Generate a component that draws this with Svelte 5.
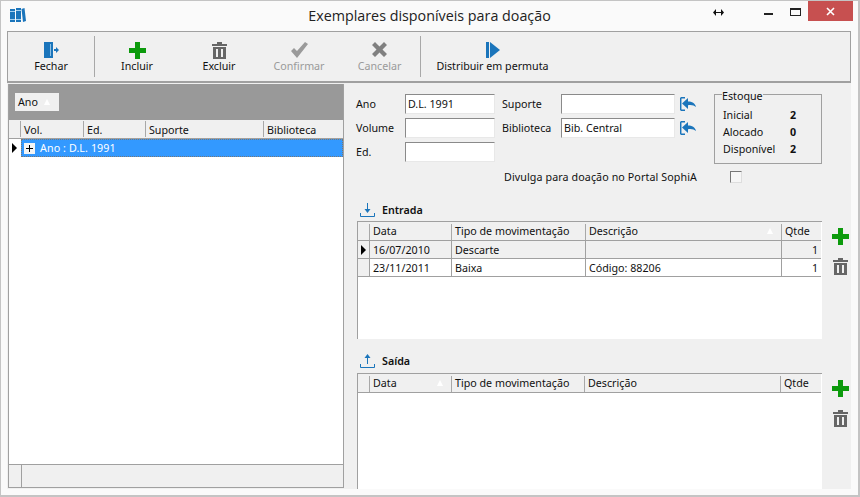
<script lang="ts">
  const tools = [
    { label: 'Fechar', icon: 'door', width: 86 },
    { label: 'Incluir', icon: 'plus', width: 85 },
    { label: 'Excluir', icon: 'trash', width: 80 },
    { label: 'Confirmar', icon: 'check', width: 80, off: true },
    { label: 'Cancelar', icon: 'cross', width: 81, off: true },
    { label: 'Distribuir em permuta', icon: 'play', width: 144 }
  ];

  const stock = [
    ['Inicial', 2],
    ['Alocado', 0],
    ['Disponível', 2]
  ];

  const entries = [
    { date: '16/07/2010', type: 'Descarte', desc: '', qty: 1, current: true },
    { date: '23/11/2011', type: 'Baixa', desc: 'Código: 88206', qty: 1 }
  ];
</script>

{#snippet icon(name)}
  {#if name === 'door'}
    <svg width="16" height="16" viewBox="0 0 16 16"><path fill="#1b75bb" d="M1 0h9v16H1z" /><path fill="#8cc0e6" d="M7 2h1v12H7z" /><path fill="#1b75bb" d="M11 7h2V5l3 3-3 3V9h-2z" /></svg>
  {:else if name === 'plus'}
    <svg width="17" height="17" viewBox="0 0 17 17"><path fill="#0c9a0c" d="M6 0h5v6h6v5h-6v6H6v-6H0V6h6z" /></svg>
  {:else if name === 'trash'}
    <svg width="15" height="17" viewBox="0 0 15 17"><path fill="#666" fill-rule="evenodd" d="M5 0h5v2h5v2H0V2h5zM1 5h13v12H1zM4 7v8h2V7zm5 0v8h2V7z" /></svg>
  {:else if name === 'check'}
    <svg width="17" height="16" viewBox="0 0 17 16"><path fill="#9a9a9a" d="M0 9l3-3 3 3 8-9 3 2-11 14z" /></svg>
  {:else if name === 'cross'}
    <svg width="15" height="15" viewBox="0 0 15 15"><path fill="#808080" d="M3 0l4.500 4.500L12 0l3 3-4.500 4.500L15 12l-3 3-4.500-4.500L3 15l-3-3 4.500-4.500L0 3z" /></svg>
  {:else if name === 'play'}
    <svg width="14" height="16" viewBox="0 0 14 16"><path fill="#1b75bb" d="M0 0h3v16H0zM4 0l10 8-10 8z" /></svg>
  {/if}
{/snippet}

{#snippet back()}
  <svg class="back" width="16" height="14" viewBox="0 0 16 14">
    <path fill="none" stroke="#1b75bb" stroke-width="1.500" d="M.7.700h4.300M.7.700v12.600M.7 13.300h4.300" />
    <path fill="#1b75bb" d="M2 6.500L8 1v3.500c4 0 7 1.500 8 5.500-2-1.500-4-2.300-8-1.800V12z" />
  </svg>
{/snippet}

{#snippet sideButtons()}
  <div class="side-buttons">
    {@render icon('plus')}
    {@render icon('trash')}
  </div>
{/snippet}

<div class="window">
  <header class="titlebar">
    <svg class="logo" width="16" height="16" viewBox="0 0 16 16">
      <path fill="#1b75bb" d="M0 2h5v13H0zM6 1h5v14H6zM11.500 2l3-1 1.500 13-3 1z" />
      <path fill="#a5d0f0" d="M0 4h5v1H0zM0 12h5v1H0zM6 3h5v1H6zM6 12h5v1H6z" />
    </svg>
    <h1>Exemplares disponíveis para doação</h1>
    <div class="controls">
      <span class="resize">
        <svg width="11" height="7" viewBox="0 0 11 7"><path fill="#111" d="M0 3.500L3 0v3h5V0l3 3.500L8 7V4H3v3z" /></svg>
      </span>
      <span class="min"></span>
      <span class="max"></span>
      <span class="close">
        <svg width="9" height="9" viewBox="0 0 9 9"><path stroke="#fff" stroke-width="1.600" d="M1 1l7 7M8 1L1 8" /></svg>
      </span>
    </div>
  </header>

  <div class="toolbar">
    {#each tools as tool, i}
      <button class="tool" class:off={tool.off} class:divided={i === 1 || i === 5} style="width: {tool.width}px">
        <span class="tool-icon">{@render icon(tool.icon)}</span>
        {tool.label}
      </button>
    {/each}
  </div>

  <main class="content">
    <section class="tree">
      <div class="group-band"><span class="chip">Ano <i class="sort"></i></span></div>
      <div class="tree-head">
        <span></span><span>Vol.</span><span>Ed.</span><span>Suporte</span><span>Biblioteca</span>
      </div>
      <div class="tree-row">
        <span class="indicator"><i class="arrow"></i></span>
        <div class="selected"><span class="expand"></span>Ano : D.L. 1991</div>
      </div>
      <div class="tree-body"></div>
      <div class="tree-foot"><span></span></div>
    </section>

    <section class="detail">
      <div class="form">
        <div class="fields">
          <label for="ano">Ano</label>
          <input id="ano" value="D.L. 1991" />
          <label for="suporte">Suporte</label>
          <input id="suporte" />
          {@render back()}

          <label for="volume">Volume</label>
          <input id="volume" />
          <label for="biblioteca">Biblioteca</label>
          <input id="biblioteca" value="Bib. Central" />
          {@render back()}

          <label for="ed">Ed.</label>
          <input id="ed" />
        </div>
        <fieldset class="stock">
          <legend>Estoque</legend>
          {#each stock as [name, value]}
            <div class="stock-row"><span>{name}</span><b>{value}</b></div>
          {/each}
        </fieldset>
      </div>

      <div class="publish">
        <span>Divulga para doação no Portal SophiA</span>
        <span class="checkbox"></span>
      </div>

      <h2 class="entrada">
        <svg width="15" height="14" viewBox="0 0 15 14">
          <path fill="none" stroke="#1b75bb" d="M.5 10v3.500h14V10" />
          <path fill="#1b75bb" d="M7 0h1v6h2.500l-3 4-3-4H7z" />
        </svg>
        Entrada
      </h2>
      <div class="table-row">
        <div class="table">
          <div class="row head">
            <span></span><span>Data</span><span>Tipo de movimentação</span>
            <span class="sorted">Descrição<i class="sort"></i></span><span>Qtde</span>
          </div>
          {#each entries as entry}
            <div class="row" class:current={entry.current}>
              <span class="indicator">{#if entry.current}<i class="arrow"></i>{/if}</span>
              <span>{entry.date}</span>
              <span>{entry.type}</span>
              <span>{entry.desc}</span>
              <span class="num">{entry.qty}</span>
            </div>
          {/each}
        </div>
        {@render sideButtons()}
      </div>

      <h2 class="saida">
        <svg width="15" height="14" viewBox="0 0 15 14">
          <path fill="none" stroke="#1b75bb" d="M.5 10v3.500h14V10" />
          <path fill="#1b75bb" d="M7 10h1V4h2.500l-3-4-3 4H7z" />
        </svg>
        Saída
      </h2>
      <div class="table-row last">
        <div class="table">
          <div class="row head">
            <span></span><span class="sorted">Data<i class="sort"></i></span><span>Tipo de movimentação</span>
            <span>Descrição</span><span>Qtde</span>
          </div>
        </div>
        {@render sideButtons()}
      </div>
    </section>
  </main>
</div>

<style>
  :global(body) {
    margin: 0;
    background: #fafafa;
  }

  .window {
    box-sizing: border-box;
    width: 860px;
    height: 497px;
    display: flex;
    flex-direction: column;
    padding: 0 7px 6px 6px;
    background: #fafafa;
    border: 1px solid #c4c4c4;
    border-right-width: 2px;
    border-bottom-width: 2px;
    font: 10.700px/14px 'Noto Sans', sans-serif;
    color: #111;
    overflow: hidden;
  }

  .titlebar {
    height: 30px;
    flex: none;
    display: grid;
    grid-template-columns: 1fr auto 1fr;
    align-items: start;
  }

  .logo {
    margin: 6px 0 0 3px;
  }

  h1 {
    margin: 5px 0 0 1px;
    font: 400 14.300px/20px 'Open Sans', sans-serif;
    color: #222;
  }

  .controls {
    justify-self: end;
    display: flex;
    margin-right: -2px;
  }

  .controls span {
    display: block;
  }

  .resize {
    margin: 8px 40px 0 0;
    line-height: 0;
  }

  .min {
    width: 9px;
    height: 2px;
    margin: 12px 17px 0 0;
    background: #222;
  }

  .max {
    box-sizing: border-box;
    width: 11px;
    height: 8px;
    margin: 7px 7px 0 0;
    border: 1px solid #222;
    border-top-width: 2px;
  }

  .close {
    width: 45px;
    height: 20px;
    display: flex !important;
    align-items: center;
    justify-content: center;
    background: #c75050;
  }

  .toolbar {
    height: 52px;
    flex: none;
    box-sizing: border-box;
    display: flex;
    background: #f0f0f0;
    border: 1px solid #a0a0a0;
    border-width: 1px 1px 2px;
  }

  .tool {
    flex: none;
    padding: 10px 0 0;
    display: flex;
    flex-direction: column;
    align-items: center;
    background: none;
    border: 0;
    font: inherit;
    color: #111;
  }

  .tool.off {
    color: #9a9a9a;
  }

  .tool.divided {
    border-left: 1px solid #a8a8a8;
    margin: 4px 0;
    padding-top: 6px;
  }

  .tool-icon {
    height: 17px;
    line-height: 0;
  }

  .content {
    flex: 1;
    min-height: 0;
    display: flex;
    background: #f0f0f0;
    padding-left: 1px;
  }

  .tree {
    width: 336px;
    flex: none;
    display: flex;
    flex-direction: column;
    margin: 1px 0;
    border: solid #a0a0a0;
    border-width: 0 1px 1px 1px;
    box-sizing: border-box;
    background: #fff;
  }

  .group-band {
    height: 36px;
    flex: none;
    box-sizing: border-box;
    padding: 9px 0 0 6px;
    background: #999;
  }

  .chip {
    box-sizing: border-box;
    width: 44px;
    height: 18px;
    display: flex;
    align-items: center;
    gap: 6px;
    padding-left: 3px;
    background: #f0f0f0;
  }

  .sort {
    width: 0;
    height: 0;
    border: 3px solid transparent;
    border-top: 0;
    border-bottom: 6px solid #fff;
    flex: none;
  }

  .tree-head {
    height: 19px;
    flex: none;
    display: grid;
    grid-template-columns: 12px 63px 62px 118px 1fr;
    box-sizing: border-box;
    background: #f0f0f0;
    border-bottom: 1px solid #a0a0a0;
  }

  .tree-head span {
    padding: 2px 0 0 3px;
    border-right: 1px solid #a8a8a8;
    margin: 1px 0;
  }

  .tree-head span:last-child {
    border-right: 0;
  }

  .tree-row {
    height: 18px;
    flex: none;
    display: flex;
  }

  .indicator {
    display: flex;
    align-items: center;
    padding-left: 3px;
    box-sizing: border-box;
    background: #f0f0f0;
  }

  .tree-row .indicator {
    width: 12px;
    background: #fff;
    flex: none;
  }

  .arrow {
    width: 0;
    height: 0;
    border-left: 5px solid #000;
    border-top: 5px solid transparent;
    border-bottom: 5px solid transparent;
  }

  .selected {
    flex: 1;
    display: flex;
    align-items: center;
    gap: 5px;
    padding-left: 2px;
    background: #3399ff;
    color: #fff;
    border: 1px dotted #777;
    letter-spacing: 0.1px;
  }

  .expand {
    position: relative;
    flex: none;
    width: 11px;
    height: 11px;
    background: #f4f4f4;
  }

  .expand::before {
    content: '';
    position: absolute;
    left: 2px;
    top: 5px;
    width: 7px;
    height: 1px;
    background: #000;
  }

  .expand::after {
    content: '';
    position: absolute;
    left: 5px;
    top: 2px;
    width: 1px;
    height: 7px;
    background: #000;
  }

  .tree-body {
    flex: 1;
  }

  .tree-foot {
    height: 23px;
    flex: none;
    box-sizing: border-box;
    background: #f0f0f0;
    border-top: 1px solid #a0a0a0;
  }

  .tree-foot span {
    display: block;
    width: 12px;
    height: 100%;
    border-right: 1px solid #a0a0a0;
  }

  .detail {
    flex: 1;
    min-width: 0;
    display: flex;
    flex-direction: column;
    padding: 11px 0 0 12px;
  }

  .form {
    display: flex;
    align-items: flex-start;
  }

  .fields {
    display: grid;
    grid-template-columns: 49px 90px 66px 114px 21px;
    row-gap: 4px;
    align-items: center;
    width: 358px;
  }

  .fields label:nth-of-type(2n) {
    padding-left: 7px;
  }

  input {
    box-sizing: border-box;
    width: 100%;
    height: 20px;
    padding: 0 2px;
    background: #fff;
    border: 1px solid;
    border-color: #8a8a8a #e8e8e8 #e8e8e8 #8a8a8a;
    font: inherit;
    color: #111;
    outline: 0;
  }

  .back {
    justify-self: end;
  }

  .stock {
    box-sizing: border-box;
    width: 108px;
    height: 70px;
    margin: 0;
    padding: 4px 0 0 8px;
    border: 1px solid #a0a0a0;
    position: relative;
  }

  .stock legend {
    position: absolute;
    left: 7px;
    top: -6px;
    padding: 0;
    background: #f0f0f0;
  }

  .stock-row {
    display: flex;
    width: 73px;
    justify-content: space-between;
    height: 17px;
    align-items: center;
  }

  .stock-row:first-of-type {
    margin-top: 7px;
  }

  .publish {
    height: 12px;
    margin: 7px 0 0 148px;
    display: flex;
    align-items: center;
    letter-spacing: 0.1px;
  }

  .publish span:first-child {
    width: 226px;
  }

  .checkbox {
    box-sizing: border-box;
    width: 12px;
    height: 12px;
    border: 1px solid;
    border-color: #777 #ddd #ddd #777;
    background: #f6f6f6;
  }

  h2 {
    margin: 0;
    height: 15px;
    display: flex;
    align-items: center;
    gap: 7px;
    padding-left: 4px;
    font: 600 10.700px/14px 'Noto Sans', sans-serif;
    flex: none;
  }

  .entrada {
    margin-top: 19px;
  }

  .saida {
    margin-top: 14px;
  }

  .table-row {
    margin: 4px 0 0 1px;
    height: 118px;
    display: flex;
    flex: none;
  }

  .table-row.last {
    margin-top: 5px;
    height: 116px;
  }

  .table {
    width: 465px;
    flex: none;
    background: #fff;
    box-sizing: border-box;
    border: solid #a0a0a0;
    border-width: 1px 0 0 1px;
  }

  .row {
    height: 18px;
    display: grid;
    grid-template-columns: 12px 82px 134px 196px 39px;
    box-sizing: border-box;
    border-bottom: 1px solid #a0a0a0;
    margin-right: 1px;
  }

  .last .row {
    grid-template-columns: 12px 82px 133px 196px 40px;
  }

  .row span {
    box-sizing: border-box;
    padding: 2px 0 0 3px;
    border-right: 1px solid #a0a0a0;
    white-space: nowrap;
  }

  .row span:last-child {
    border-right: 0;
  }

  .row.head {
    height: 19px;
    background: #f0f0f0;
  }

  .row.head span {
    margin: 2px 0 0;
    padding-top: 0;
    border-color: #a8a8a8;
  }

  .row span.sorted {
    display: flex;
    justify-content: space-between;
    padding-right: 8px;
    align-items: flex-start;
  }

  .sorted .sort {
    margin-top: 4px;
  }

  .row.current {
    background: #f0f0f0;
  }

  .row .indicator {
    padding: 0 0 0 3px;
    background: #f0f0f0;
  }

  .num {
    text-align: right;
    padding-right: 3px !important;
  }

  .side-buttons {
    margin: 7px 0 0 10px;
    display: flex;
    flex-direction: column;
    align-items: center;
    gap: 13px;
    line-height: 0;
  }
</style>
